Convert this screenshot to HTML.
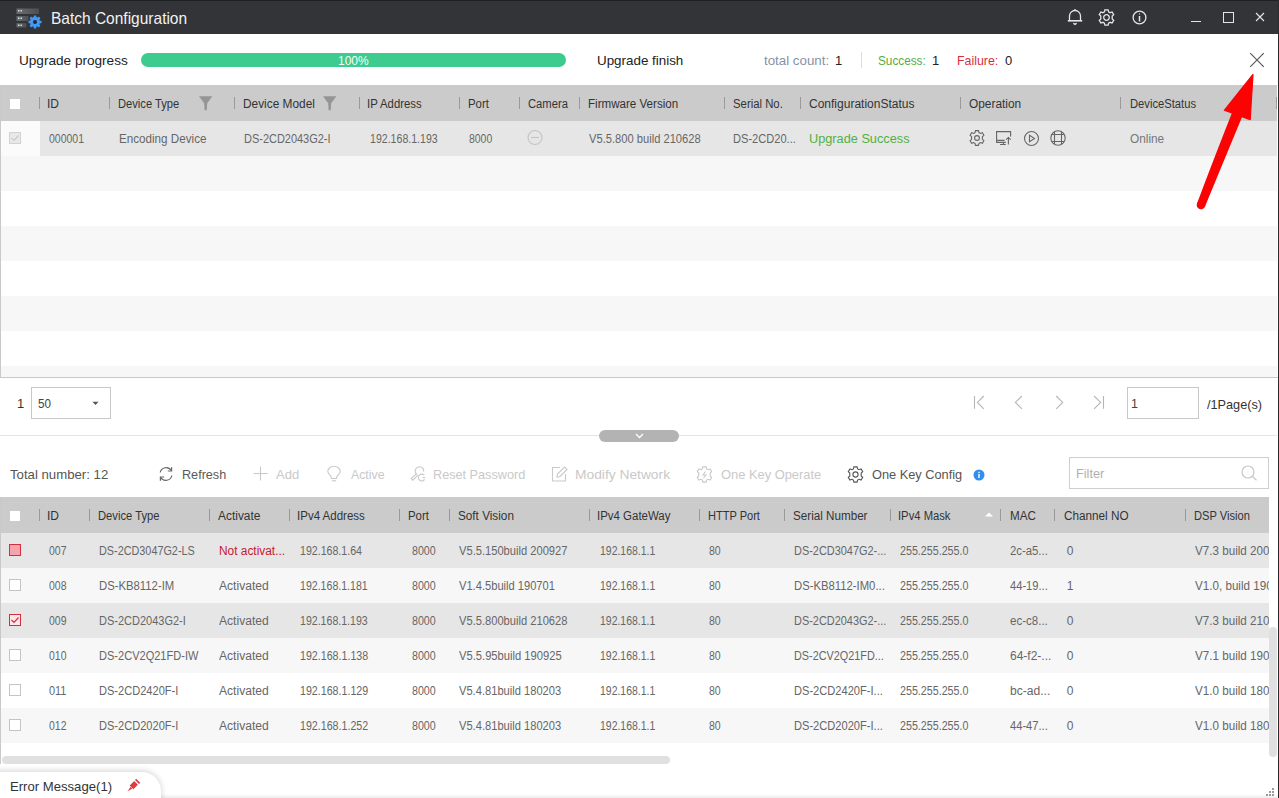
<!DOCTYPE html>
<html><head><meta charset="utf-8">
<style>
*{box-sizing:border-box;margin:0;padding:0}
html,body{width:1279px;height:798px;overflow:hidden;background:#fff}
body{position:relative;font-family:"Liberation Sans",sans-serif;color:#333}
.a{position:absolute}
.t{position:absolute;white-space:nowrap;font-size:12px;margin-top:1px}
svg{position:absolute;overflow:visible}
.sep{position:absolute;width:1px;height:12px;background:#999}
.row{position:absolute;height:35px}
.cb{position:absolute;width:12px;height:12px;border:1px solid #c4c4c4;background:#fff}
</style></head><body>

<div class="a" style="left:0;top:0;width:1279px;height:34px;background:#323438;border-top:1px solid #1f2023"></div>
<div class="a" style="left:1278px;top:0;width:1px;height:798px;background:#2a2b2e"></div>
<svg style="left:16px;top:8px" width="26" height="22" viewBox="0 0 26 22">
  <defs><linearGradient id="lg" x1="0" x2="1"><stop offset="0" stop-color="#6a6d72"/><stop offset="1" stop-color="#4b4e53"/></linearGradient></defs>
  <rect x="0.5" y="0.5" width="22.5" height="5.5" fill="url(#lg)"/>
  <rect x="0.5" y="8" width="12" height="5" fill="url(#lg)"/>
  <rect x="0.5" y="15.2" width="10" height="4.2" fill="url(#lg)"/>
  <rect x="2" y="2" width="1.5" height="1.5" fill="#cfd8dc"/><rect x="4.5" y="2" width="1.5" height="1.5" fill="#cfd8dc"/>
  <rect x="2" y="9.5" width="1.5" height="1.5" fill="#cfe8ec"/><rect x="4.5" y="9.5" width="1.5" height="1.5" fill="#cfe8ec"/>
  <rect x="2" y="16.5" width="1.5" height="1.5" fill="#bfe0d0"/><rect x="4.5" y="16.5" width="1.5" height="1.5" fill="#bfe0d0"/>
  <g transform="translate(19,14)">
    <circle r="5.0" fill="#4499f5"/>
    <g fill="#4499f5">
      <rect x="-1.3" y="-6.5" width="2.6" height="13" rx="0.5"/>
      <rect x="-1.3" y="-6.5" width="2.6" height="13" rx="0.5" transform="rotate(45)"/>
      <rect x="-1.3" y="-6.5" width="2.6" height="13" rx="0.5" transform="rotate(90)"/>
      <rect x="-1.3" y="-6.5" width="2.6" height="13" rx="0.5" transform="rotate(135)"/>
    </g>
    <circle r="2" fill="#23272e"/>
  </g>
</svg>
<div class="t" style="left:51.40px;top:0px;line-height:35px;font-size:16.5px;color:#f2f2f2;transform:scaleX(0.9392);transform-origin:0 0;">Batch Configuration</div>
<svg style="left:1066px;top:8px" width="18" height="18" viewBox="0 0 18 18" fill="none" stroke="#e6e6e6" stroke-width="1.3">
  <path d="M3.5 12.5 V8 A5.5 5.5 0 0 1 14.5 8 V12.5"/>
  <path d="M1.8 12.8 H16.2" stroke-width="1.6"/>
  <path d="M9 1 V2.2"/>
  <path d="M7.3 15.2 L9 16.4 L10.7 15.2"/>
</svg>
<svg style="left:1098px;top:8.5px" width="17" height="17" viewBox="-8.5 -8.5 17 17" fill="none" stroke="#e6e6e6" stroke-width="1.3"><path d="M-1.6 -7.6 H1.6 L2.1 -5.6 L3.6 -4.8 L5.6 -5.5 L7.2 -2.8 L5.7 -1.4 V1.4 L7.2 2.8 L5.6 5.5 L3.6 4.8 L2.1 5.6 L1.6 7.6 H-1.6 L-2.1 5.6 L-3.6 4.8 L-5.6 5.5 L-7.2 2.8 L-5.7 1.4 V-1.4 L-7.2 -2.8 L-5.6 -5.5 L-3.6 -4.8 L-2.1 -5.6 Z"/><circle r="2.8"/></svg>
<svg style="left:1132px;top:9.5px" width="15" height="15" viewBox="0 0 15 15" fill="none" stroke="#e6e6e6" stroke-width="1.3">
  <circle cx="7.5" cy="7.5" r="6.4"/><path d="M7.5 6 V11.5" stroke-width="1.5"/><circle cx="7.5" cy="3.9" r="0.6" fill="#e6e6e6" stroke="none"/></svg>
<div class="a" style="left:1191px;top:21px;width:10px;height:1px;background:#e6e6e6"></div>
<div class="a" style="left:1223px;top:12px;width:11px;height:11px;border:1px solid #e6e6e6"></div>
<svg style="left:1255px;top:12px" width="10" height="10" viewBox="0 0 10 10" stroke="#e6e6e6" stroke-width="1.1"><path d="M1 1 L9 9 M9 1 L1 9"/></svg>
<div class="t" style="left:19.00px;top:48px;line-height:24px;font-size:13.5px;color:#222;transform:scaleX(1.0064);transform-origin:0 0;">Upgrade progress</div>
<div class="a" style="left:141px;top:53px;width:425px;height:14px;border-radius:7px;background:#3dcb8e"></div>
<div class="t" style="left:338.00px;top:53px;line-height:14px;font-size:12px;color:#f4fff8;transform:scaleX(0.9993);transform-origin:0 0;">100%</div>
<div class="t" style="left:597.00px;top:48px;line-height:24px;font-size:13px;color:#222;transform:scaleX(1.0291);transform-origin:0 0;">Upgrade finish</div>
<div class="t" style="left:764.00px;top:48px;line-height:24px;font-size:13px;color:#8793a5;transform:scaleX(1.0240);transform-origin:0 0;">total count:</div>
<div class="t" style="left:835.00px;top:48px;line-height:24px;font-size:13px;color:#222;transform:scaleX(1.0000);transform-origin:0 0;">1</div>
<div class="a" style="left:861px;top:52px;width:1px;height:16px;background:#dcdcdc"></div>
<div class="t" style="left:878.00px;top:48px;line-height:24px;font-size:12.2px;color:#52ad45;transform:scaleX(0.9662);transform-origin:0 0;">Success:</div>
<div class="t" style="left:932.00px;top:48px;line-height:24px;font-size:13px;color:#222;transform:scaleX(1.0000);transform-origin:0 0;">1</div>
<div class="t" style="left:957.00px;top:48px;line-height:24px;font-size:12.2px;color:#d5303b;transform:scaleX(1.0139);transform-origin:0 0;">Failure:</div>
<div class="t" style="left:1005.00px;top:48px;line-height:24px;font-size:13px;color:#222;transform:scaleX(1.0000);transform-origin:0 0;">0</div>
<svg style="left:1249px;top:52px" width="16" height="16" viewBox="0 0 16 16" stroke="#5a5a5a" stroke-width="1.2"><path d="M1.2 1.2 L14.8 14.8 M14.8 1.2 L1.2 14.8"/></svg>
<div class="a" style="left:0;top:85px;width:1px;height:293px;background:#c9c9c9"></div>
<div class="a" style="left:0;top:377px;width:1278px;height:1px;background:#c9c9c9"></div>
<div class="a" style="left:1px;top:85px;width:1276px;height:36px;background:#cbcbcb"></div>
<div class="a" style="left:10px;top:99px;width:10px;height:10px;background:#fff"></div>
<div class="sep" style="left:39px;top:97px"></div>
<div class="sep" style="left:109px;top:97px"></div>
<div class="sep" style="left:234px;top:97px"></div>
<div class="sep" style="left:359px;top:97px"></div>
<div class="sep" style="left:459px;top:97px"></div>
<div class="sep" style="left:519px;top:97px"></div>
<div class="sep" style="left:579px;top:97px"></div>
<div class="sep" style="left:724px;top:97px"></div>
<div class="sep" style="left:800px;top:97px"></div>
<div class="sep" style="left:960px;top:97px"></div>
<div class="sep" style="left:1120px;top:97px"></div>
<div class="sep" style="left:1276px;top:97px"></div>
<div class="t" style="left:47.00px;top:85px;line-height:36px;font-size:12px;color:#333;transform:scaleX(1.0000);transform-origin:0 0;">ID</div>
<div class="t" style="left:118.00px;top:85px;line-height:36px;font-size:12px;color:#333;transform:scaleX(0.9306);transform-origin:0 0;">Device Type</div>
<div class="t" style="left:243.00px;top:85px;line-height:36px;font-size:12px;color:#333;transform:scaleX(0.9892);transform-origin:0 0;">Device Model</div>
<div class="t" style="left:367.00px;top:85px;line-height:36px;font-size:12px;color:#333;transform:scaleX(0.9446);transform-origin:0 0;">IP Address</div>
<div class="t" style="left:468.00px;top:85px;line-height:36px;font-size:12px;color:#333;transform:scaleX(0.9482);transform-origin:0 0;">Port</div>
<div class="t" style="left:528.00px;top:85px;line-height:36px;font-size:12px;color:#333;transform:scaleX(0.9359);transform-origin:0 0;">Camera</div>
<div class="t" style="left:588.00px;top:85px;line-height:36px;font-size:12px;color:#333;transform:scaleX(0.9657);transform-origin:0 0;">Firmware Version</div>
<div class="t" style="left:733.00px;top:85px;line-height:36px;font-size:12px;color:#333;transform:scaleX(0.9455);transform-origin:0 0;">Serial No.</div>
<div class="t" style="left:809.00px;top:85px;line-height:36px;font-size:12px;color:#333;transform:scaleX(1.0010);transform-origin:0 0;">ConfigurationStatus</div>
<div class="t" style="left:969.00px;top:85px;line-height:36px;font-size:12px;color:#333;transform:scaleX(0.9899);transform-origin:0 0;">Operation</div>
<div class="t" style="left:1130.00px;top:85px;line-height:36px;font-size:12px;color:#333;transform:scaleX(0.9335);transform-origin:0 0;">DeviceStatus</div>
<svg style="left:199px;top:96px" width="14" height="15" viewBox="0 0 14 15"><path d="M0 0.2 H13.3 L8.2 7.2 L7.8 14.3 H5.6 L5.2 7.2 Z" fill="#959595"/></svg>
<svg style="left:323px;top:96px" width="14" height="15" viewBox="0 0 14 15"><path d="M0 0.2 H13.3 L8.2 7.2 L7.8 14.3 H5.6 L5.2 7.2 Z" fill="#959595"/></svg>
<div class="row" style="left:1px;top:121px;width:39px;background:#fbfbfb"></div>
<div class="row" style="left:40px;top:121px;width:1237px;background:#e6e6e6"></div>
<div class="a" style="left:9px;top:132px;width:12px;height:12px;border:1px solid #d2d2d2;background:#e8e8e8"></div>
<svg style="left:9px;top:132px" width="12" height="12" viewBox="0 0 12 12" fill="none" stroke="#b8b8b8" stroke-width="1"><path d="M2.5 6 L5 8.5 L9.5 3.5"/></svg>
<div class="t" style="left:49.00px;top:121px;line-height:35px;font-size:12px;color:#666;transform:scaleX(0.8732);transform-origin:0 0;">000001</div>
<div class="t" style="left:119.00px;top:121px;line-height:35px;font-size:12px;color:#666;transform:scaleX(0.9709);transform-origin:0 0;">Encoding Device</div>
<div class="t" style="left:244.00px;top:121px;line-height:35px;font-size:12px;color:#666;transform:scaleX(0.9139);transform-origin:0 0;">DS-2CD2043G2-I</div>
<div class="t" style="left:369.50px;top:121px;line-height:35px;font-size:12px;color:#666;transform:scaleX(0.8824);transform-origin:0 0;">192.168.1.193</div>
<div class="t" style="left:469.00px;top:121px;line-height:35px;font-size:12px;color:#666;transform:scaleX(0.8697);transform-origin:0 0;">8000</div>
<div class="t" style="left:589.00px;top:121px;line-height:35px;font-size:12px;color:#666;transform:scaleX(0.9300);transform-origin:0 0;">V5.5.800 build 210628</div>
<div class="t" style="left:733.00px;top:121px;line-height:35px;font-size:12px;color:#666;transform:scaleX(0.9234);transform-origin:0 0;">DS-2CD20...</div>
<div class="t" style="left:809.00px;top:121px;line-height:35px;font-size:12px;color:#52b043;transform:scaleX(1.0611);transform-origin:0 0;">Upgrade Success</div>
<div class="t" style="left:1130.00px;top:121px;line-height:35px;font-size:12px;color:#777;transform:scaleX(0.9853);transform-origin:0 0;">Online</div>
<svg style="left:527px;top:130px" width="16" height="16" viewBox="0 0 16 16" fill="none" stroke="#c4c4c4" stroke-width="1.1"><circle cx="8" cy="7.5" r="7"/><path d="M4 7.5 H12"/></svg>
<svg style="left:969px;top:130px" width="16" height="16" viewBox="-8 -8 16 16" fill="none" stroke="#666" stroke-width="1.1"><path d="M-1.5 -7.4 H1.5 L2 -5.4 L3.5 -4.6 L5.4 -5.3 L6.9 -2.7 L5.4 -1.3 V1.3 L6.9 2.7 L5.4 5.3 L3.5 4.6 L2 5.4 L1.5 7.4 H-1.5 L-2 5.4 L-3.5 4.6 L-5.4 5.3 L-6.9 2.7 L-5.4 1.3 V-1.3 L-6.9 -2.7 L-5.4 -5.3 L-3.5 -4.6 L-2 -5.4 Z"/><circle r="2.4"/></svg>
<svg style="left:996px;top:131px" width="16" height="15" viewBox="0 0 16 15" fill="none" stroke="#666" stroke-width="1.1"><path d="M14.6 5.4 V0.6 H0.6 V11.4 H9.8 M0.6 9.4 H8.6 M7.4 11.4 V13.5 M4 13.5 H9.8"/><path d="M12.4 13.6 V6.4 M10.1 8.6 L12.4 6.4 L14.7 8.6"/></svg>
<svg style="left:1024px;top:131px" width="16" height="16" viewBox="0 0 16 16" fill="none" stroke="#666" stroke-width="1.1"><circle cx="7.5" cy="7.5" r="7"/><path d="M5.5 4.3 L10.5 7.5 L5.5 10.7 Z"/></svg>
<svg style="left:1050px;top:130px" width="16" height="16" viewBox="0 0 16 16" fill="none" stroke="#666" stroke-width="1.1"><circle cx="8" cy="8" r="7.2"/><path d="M4.5 1.6 V14.4 M11.5 1.6 V14.4 M1.6 4.5 H14.4 M1.6 11.5 H14.4"/></svg>
<div class="row" style="left:1px;top:156px;width:1276px;height:35px;background:#f7f7f7"></div>
<div class="row" style="left:1px;top:191px;width:1276px;height:35px;background:#ffffff"></div>
<div class="row" style="left:1px;top:226px;width:1276px;height:35px;background:#f7f7f7"></div>
<div class="row" style="left:1px;top:261px;width:1276px;height:35px;background:#ffffff"></div>
<div class="row" style="left:1px;top:296px;width:1276px;height:35px;background:#f7f7f7"></div>
<div class="row" style="left:1px;top:331px;width:1276px;height:35px;background:#ffffff"></div>
<div class="row" style="left:1px;top:366px;width:1276px;height:11px;background:#f7f7f7"></div>
<div class="t" style="left:17.00px;top:387px;line-height:32px;font-size:13px;color:#333;transform:scaleX(1.0000);transform-origin:0 0;">1</div>
<div class="a" style="left:31px;top:387px;width:80px;height:32px;border:1px solid #c8c8c8;background:#fff"></div>
<div class="t" style="left:38.00px;top:387px;line-height:32px;font-size:12.5px;color:#444;transform:scaleX(0.9318);transform-origin:0 0;">50</div>
<svg style="left:92px;top:401px" width="7" height="5" viewBox="0 0 7 5"><path d="M0.5 0.8 H6.5 L3.5 4 Z" fill="#555"/></svg>
<svg style="left:972px;top:395px" width="134" height="16" viewBox="0 0 134 16" fill="none" stroke="#b5b5b5" stroke-width="1.1"><path d="M2.5 1 V13.8 M11.8 1 L5.4 7.4 L11.8 13.8"/><path d="M49.9 1 L43.4 7.4 L49.9 13.8"/><path d="M84.2 1 L90.7 7.4 L84.2 13.8"/><path d="M122.1 1 L128.6 7.4 L122.1 13.8 M131.5 1 V13.8"/></svg>
<div class="a" style="left:1127px;top:387px;width:72px;height:32px;border:1px solid #c8c8c8;background:#fff"></div>
<div class="t" style="left:1131.00px;top:387px;line-height:32px;font-size:12.5px;color:#444;transform:scaleX(1.0000);transform-origin:0 0;">1</div>
<div class="t" style="left:1207.00px;top:387px;line-height:33px;font-size:13px;color:#333;transform:scaleX(0.9762);transform-origin:0 0;">/1Page(s)</div>
<div class="a" style="left:0;top:435px;width:1277px;height:1px;background:#e4e4e4"></div>
<div class="a" style="left:599px;top:430px;width:80px;height:12px;border-radius:6px;background:#b3b3b3"></div>
<svg style="left:635px;top:433px" width="9" height="6" viewBox="0 0 9 6" fill="none" stroke="#fff" stroke-width="1.3"><path d="M1 1 L4.5 4.5 L8 1"/></svg>
<div class="t" style="left:9.50px;top:462px;line-height:24px;font-size:13px;color:#555;transform:scaleX(1.0145);transform-origin:0 0;">Total number: 12</div>
<svg style="left:158px;top:466px" width="16" height="16" viewBox="0 0 16 16" fill="none" stroke="#666" stroke-width="1.2"><path d="M2.2 6.5 A6 6 0 0 1 13.2 4.5"/><path d="M13.6 1.2 V5 H9.8"/><path d="M13.8 9.5 A6 6 0 0 1 2.8 11.5"/><path d="M2.4 14.8 V11 H6.2"/></svg>
<div class="t" style="left:181.50px;top:462px;line-height:24px;font-size:13px;color:#5a5a5a;transform:scaleX(0.9709);transform-origin:0 0;">Refresh</div>
<svg style="left:253px;top:466px" width="15" height="15" viewBox="0 0 15 15" fill="none" stroke="#c9c9c9" stroke-width="1.1"><path d="M7.5 0.5 V14.5 M0.5 7.5 H14.5"/></svg>
<div class="t" style="left:276.30px;top:462px;line-height:24px;font-size:13px;color:#c9c9c9;transform:scaleX(1.0043);transform-origin:0 0;">Add</div>
<svg style="left:327px;top:466px" width="14" height="16" viewBox="0 0 14 16" fill="none" stroke="#c9c9c9" stroke-width="1.1"><path d="M4.3 12.5 L4.3 11.5 C4.3 9.5 0.8 8.2 0.8 5.4 A6.2 5.2 0 0 1 13.2 5.4 C13.2 8.2 9.7 9.5 9.7 11.5 L9.7 12.5 Z"/><path d="M4.8 14.8 H9.2"/></svg>
<div class="t" style="left:350.50px;top:462px;line-height:24px;font-size:13px;color:#c9c9c9;transform:scaleX(0.9454);transform-origin:0 0;">Active</div>
<svg style="left:410px;top:466px" width="17" height="16" viewBox="0 0 17 16" fill="none" stroke="#c9c9c9" stroke-width="1.1"><path d="M7.2 8.6 A4.2 4.2 0 1 1 13.6 5.6"/><path d="M6.6 7.6 L1.2 12.6 L2.6 14.2 L8.0 9.2"/><path d="M14.6 13.4 A3.4 3.4 0 1 1 14.2 9.2"/><path d="M15.2 11.6 H12.6"/></svg>
<div class="t" style="left:433.00px;top:462px;line-height:24px;font-size:13px;color:#c9c9c9;transform:scaleX(0.9741);transform-origin:0 0;">Reset Password</div>
<svg style="left:551px;top:466px" width="17" height="16" viewBox="0 0 17 16" fill="none" stroke="#c9c9c9" stroke-width="1.1"><path d="M9 1.5 H1.5 V15 H14.5 V8"/><path d="M6 11 L6.5 8 L13.5 1 L16 3.5 L9 10.5 Z"/></svg>
<div class="t" style="left:575.00px;top:462px;line-height:24px;font-size:13px;color:#c9c9c9;transform:scaleX(1.0609);transform-origin:0 0;">Modify Network</div>
<svg style="left:696px;top:466px" width="17" height="17" viewBox="-8.5 -8.5 17 17" fill="none" stroke="#c9c9c9" stroke-width="1.1"><path d="M-1.6 -7.6 H1.6 L2.1 -5.6 L3.6 -4.8 L5.6 -5.5 L7.2 -2.8 L5.7 -1.4 V1.4 L7.2 2.8 L5.6 5.5 L3.6 4.8 L2.1 5.6 L1.6 7.6 H-1.6 L-2.1 5.6 L-3.6 4.8 L-5.6 5.5 L-7.2 2.8 L-5.7 1.4 V-1.4 L-7.2 -2.8 L-5.6 -5.5 L-3.6 -4.8 L-2.1 -5.6 Z"/><path d="M1 -3 L-1.5 0.5 H1.5 L-1 3.5"/></svg>
<div class="t" style="left:721.00px;top:462px;line-height:24px;font-size:13px;color:#c9c9c9;transform:scaleX(0.9907);transform-origin:0 0;">One Key Operate</div>
<svg style="left:847px;top:466px" width="17" height="17" viewBox="-8.5 -8.5 17 17" fill="none" stroke="#555" stroke-width="1.1"><path d="M-1.6 -7.6 H1.6 L2.1 -5.6 L3.6 -4.8 L5.6 -5.5 L7.2 -2.8 L5.7 -1.4 V1.4 L7.2 2.8 L5.6 5.5 L3.6 4.8 L2.1 5.6 L1.6 7.6 H-1.6 L-2.1 5.6 L-3.6 4.8 L-5.6 5.5 L-7.2 2.8 L-5.7 1.4 V-1.4 L-7.2 -2.8 L-5.6 -5.5 L-3.6 -4.8 L-2.1 -5.6 Z"/><circle r="2.6"/></svg>
<div class="t" style="left:872.00px;top:462px;line-height:24px;font-size:13px;color:#555;transform:scaleX(0.9831);transform-origin:0 0;">One Key Config</div>
<svg style="left:973px;top:469px" width="12" height="12" viewBox="0 0 12 12"><circle cx="6" cy="6" r="5.5" fill="#2f8ef0"/><rect x="5.3" y="5" width="1.4" height="4" fill="#fff"/><rect x="5.3" y="2.8" width="1.4" height="1.3" fill="#fff"/></svg>
<div class="a" style="left:1069px;top:457px;width:200px;height:32px;border:1px solid #cfcfcf;background:#fff"></div>
<div class="t" style="left:1076.00px;top:457px;line-height:32px;font-size:12.5px;color:#b0b0b0;transform:scaleX(1.0145);transform-origin:0 0;">Filter</div>
<svg style="left:1241px;top:465px" width="17" height="16" viewBox="0 0 17 16" fill="none" stroke="#c8c8c8" stroke-width="1.2"><circle cx="7" cy="7" r="6"/><path d="M11.3 11.3 L15.5 15.2"/></svg>
<div class="a" style="left:0;top:497px;width:1px;height:267px;background:#c9c9c9"></div>
<div class="a" style="left:1px;top:497px;width:1268px;height:36px;background:#cbcbcb"></div>
<div class="a" style="left:10px;top:511px;width:10px;height:10px;background:#fff"></div>
<div class="sep" style="left:39px;top:509px"></div>
<div class="sep" style="left:89px;top:509px"></div>
<div class="sep" style="left:209px;top:509px"></div>
<div class="sep" style="left:289px;top:509px"></div>
<div class="sep" style="left:399px;top:509px"></div>
<div class="sep" style="left:449px;top:509px"></div>
<div class="sep" style="left:589px;top:509px"></div>
<div class="sep" style="left:699px;top:509px"></div>
<div class="sep" style="left:784px;top:509px"></div>
<div class="sep" style="left:890px;top:509px"></div>
<div class="sep" style="left:1000px;top:509px"></div>
<div class="sep" style="left:1054px;top:509px"></div>
<div class="sep" style="left:1185px;top:509px"></div>
<div class="t" style="left:47.00px;top:497px;line-height:36px;font-size:12px;color:#333;transform:scaleX(1.0000);transform-origin:0 0;">ID</div>
<div class="t" style="left:98.00px;top:497px;line-height:36px;font-size:12px;color:#333;transform:scaleX(0.9344);transform-origin:0 0;">Device Type</div>
<div class="t" style="left:218.00px;top:497px;line-height:36px;font-size:12px;color:#333;transform:scaleX(0.9939);transform-origin:0 0;">Activate</div>
<div class="t" style="left:296.50px;top:497px;line-height:36px;font-size:12px;color:#333;transform:scaleX(0.9593);transform-origin:0 0;">IPv4 Address</div>
<div class="t" style="left:408.00px;top:497px;line-height:36px;font-size:12px;color:#333;transform:scaleX(0.9482);transform-origin:0 0;">Port</div>
<div class="t" style="left:458.00px;top:497px;line-height:36px;font-size:12px;color:#333;transform:scaleX(0.9783);transform-origin:0 0;">Soft Vision</div>
<div class="t" style="left:596.50px;top:497px;line-height:36px;font-size:12px;color:#333;transform:scaleX(0.9550);transform-origin:0 0;">IPv4 GateWay</div>
<div class="t" style="left:708.00px;top:497px;line-height:36px;font-size:12px;color:#333;transform:scaleX(0.9200);transform-origin:0 0;">HTTP Port</div>
<div class="t" style="left:793.00px;top:497px;line-height:36px;font-size:12px;color:#333;transform:scaleX(0.9714);transform-origin:0 0;">Serial Number</div>
<div class="t" style="left:898.00px;top:497px;line-height:36px;font-size:12px;color:#333;transform:scaleX(0.9372);transform-origin:0 0;">IPv4 Mask</div>
<div class="t" style="left:1009.50px;top:497px;line-height:36px;font-size:12px;color:#333;transform:scaleX(0.9722);transform-origin:0 0;">MAC</div>
<div class="t" style="left:1064.00px;top:497px;line-height:36px;font-size:12px;color:#333;transform:scaleX(0.9779);transform-origin:0 0;">Channel NO</div>
<div class="t" style="left:1194.00px;top:497px;line-height:36px;font-size:12px;color:#333;transform:scaleX(0.9281);transform-origin:0 0;">DSP Vision</div>
<svg style="left:985px;top:512px" width="8" height="5" viewBox="0 0 8 5"><path d="M0 4.5 L4 0.5 L8 4.5 Z" fill="#fff"/></svg>
<div class="a" style="left:1px;top:533px;width:1268px;height:231px;overflow:hidden">
<div class="row" style="left:0;top:0px;width:1268px;background:#e6e6e6"></div>
<div class="t" style="left:48.25px;top:0px;line-height:35px;font-size:12px;color:#666;transform:scaleX(0.8723);transform-origin:0 0;">007</div>
<div class="t" style="left:98.25px;top:0px;line-height:35px;font-size:12px;color:#666;transform:scaleX(0.9029);transform-origin:0 0;">DS-2CD3047G2-LS</div>
<div class="t" style="left:218.25px;top:0px;line-height:35px;font-size:12px;color:#c8182f;transform:scaleX(0.9908);transform-origin:0 0;">Not activat...</div>
<div class="t" style="left:298.50px;top:0px;line-height:35px;font-size:12px;color:#666;transform:scaleX(0.8843);transform-origin:0 0;">192.168.1.64</div>
<div class="t" style="left:410.75px;top:0px;line-height:35px;font-size:12px;color:#666;transform:scaleX(0.8882);transform-origin:0 0;">8000</div>
<div class="t" style="left:457.75px;top:0px;line-height:35px;font-size:12px;color:#666;transform:scaleX(0.9287);transform-origin:0 0;">V5.5.150build 200927</div>
<div class="t" style="left:598.50px;top:0px;line-height:35px;font-size:12px;color:#666;transform:scaleX(0.8710);transform-origin:0 0;">192.168.1.1</div>
<div class="t" style="left:707.75px;top:0px;line-height:35px;font-size:12px;color:#666;transform:scaleX(0.8776);transform-origin:0 0;">80</div>
<div class="t" style="left:793.00px;top:0px;line-height:35px;font-size:12px;color:#666;transform:scaleX(0.9105);transform-origin:0 0;">DS-2CD3047G2-...</div>
<div class="t" style="left:899.00px;top:0px;line-height:35px;font-size:12px;color:#666;transform:scaleX(0.8921);transform-origin:0 0;">255.255.255.0</div>
<div class="t" style="left:1009.00px;top:0px;line-height:35px;font-size:12px;color:#666;transform:scaleX(0.9449);transform-origin:0 0;">2c-a5...</div>
<div class="t" style="left:1065.75px;top:0px;line-height:35px;font-size:12px;color:#666;transform:scaleX(1.0000);transform-origin:0 0;">0</div>
<div class="t" style="left:1193.50px;top:0px;line-height:35px;font-size:12px;color:#666;transform:scaleX(0.9700);transform-origin:0 0;">V7.3 build 200922</div>
<div class="row" style="left:0;top:35px;width:1268px;background:#f7f7f7"></div>
<div class="t" style="left:48.25px;top:35px;line-height:35px;font-size:12px;color:#666;transform:scaleX(0.8723);transform-origin:0 0;">008</div>
<div class="t" style="left:98.25px;top:35px;line-height:35px;font-size:12px;color:#666;transform:scaleX(0.9429);transform-origin:0 0;">DS-KB8112-IM</div>
<div class="t" style="left:218.25px;top:35px;line-height:35px;font-size:12px;color:#666;transform:scaleX(1.0065);transform-origin:0 0;">Activated</div>
<div class="t" style="left:298.50px;top:35px;line-height:35px;font-size:12px;color:#666;transform:scaleX(0.8824);transform-origin:0 0;">192.168.1.181</div>
<div class="t" style="left:410.75px;top:35px;line-height:35px;font-size:12px;color:#666;transform:scaleX(0.8882);transform-origin:0 0;">8000</div>
<div class="t" style="left:457.75px;top:35px;line-height:35px;font-size:12px;color:#666;transform:scaleX(0.9277);transform-origin:0 0;">V1.4.5build 190701</div>
<div class="t" style="left:598.50px;top:35px;line-height:35px;font-size:12px;color:#666;transform:scaleX(0.8710);transform-origin:0 0;">192.168.1.1</div>
<div class="t" style="left:707.75px;top:35px;line-height:35px;font-size:12px;color:#666;transform:scaleX(0.8776);transform-origin:0 0;">80</div>
<div class="t" style="left:793.00px;top:35px;line-height:35px;font-size:12px;color:#666;transform:scaleX(0.9413);transform-origin:0 0;">DS-KB8112-IM0...</div>
<div class="t" style="left:899.00px;top:35px;line-height:35px;font-size:12px;color:#666;transform:scaleX(0.8921);transform-origin:0 0;">255.255.255.0</div>
<div class="t" style="left:1009.00px;top:35px;line-height:35px;font-size:12px;color:#666;transform:scaleX(0.9292);transform-origin:0 0;">44-19...</div>
<div class="t" style="left:1065.75px;top:35px;line-height:35px;font-size:12px;color:#666;transform:scaleX(1.0000);transform-origin:0 0;">1</div>
<div class="t" style="left:1193.50px;top:35px;line-height:35px;font-size:12px;color:#666;transform:scaleX(0.9700);transform-origin:0 0;">V1.0, build 190701</div>
<div class="row" style="left:0;top:70px;width:1268px;background:#e6e6e6"></div>
<div class="t" style="left:48.25px;top:70px;line-height:35px;font-size:12px;color:#666;transform:scaleX(0.8723);transform-origin:0 0;">009</div>
<div class="t" style="left:98.25px;top:70px;line-height:35px;font-size:12px;color:#666;transform:scaleX(0.9166);transform-origin:0 0;">DS-2CD2043G2-I</div>
<div class="t" style="left:218.25px;top:70px;line-height:35px;font-size:12px;color:#666;transform:scaleX(1.0065);transform-origin:0 0;">Activated</div>
<div class="t" style="left:298.50px;top:70px;line-height:35px;font-size:12px;color:#666;transform:scaleX(0.8824);transform-origin:0 0;">192.168.1.193</div>
<div class="t" style="left:410.75px;top:70px;line-height:35px;font-size:12px;color:#666;transform:scaleX(0.8882);transform-origin:0 0;">8000</div>
<div class="t" style="left:457.75px;top:70px;line-height:35px;font-size:12px;color:#666;transform:scaleX(0.9287);transform-origin:0 0;">V5.5.800build 210628</div>
<div class="t" style="left:598.50px;top:70px;line-height:35px;font-size:12px;color:#666;transform:scaleX(0.8710);transform-origin:0 0;">192.168.1.1</div>
<div class="t" style="left:707.75px;top:70px;line-height:35px;font-size:12px;color:#666;transform:scaleX(0.8776);transform-origin:0 0;">80</div>
<div class="t" style="left:793.00px;top:70px;line-height:35px;font-size:12px;color:#666;transform:scaleX(0.9105);transform-origin:0 0;">DS-2CD2043G2-...</div>
<div class="t" style="left:899.00px;top:70px;line-height:35px;font-size:12px;color:#666;transform:scaleX(0.8921);transform-origin:0 0;">255.255.255.0</div>
<div class="t" style="left:1009.00px;top:70px;line-height:35px;font-size:12px;color:#666;transform:scaleX(0.9612);transform-origin:0 0;">ec-c8...</div>
<div class="t" style="left:1065.75px;top:70px;line-height:35px;font-size:12px;color:#666;transform:scaleX(1.0000);transform-origin:0 0;">0</div>
<div class="t" style="left:1193.50px;top:70px;line-height:35px;font-size:12px;color:#666;transform:scaleX(0.9700);transform-origin:0 0;">V7.3 build 210628</div>
<div class="row" style="left:0;top:105px;width:1268px;background:#f7f7f7"></div>
<div class="t" style="left:48.25px;top:105px;line-height:35px;font-size:12px;color:#666;transform:scaleX(0.8723);transform-origin:0 0;">010</div>
<div class="t" style="left:98.25px;top:105px;line-height:35px;font-size:12px;color:#666;transform:scaleX(0.9200);transform-origin:0 0;">DS-2CV2Q21FD-IW</div>
<div class="t" style="left:218.25px;top:105px;line-height:35px;font-size:12px;color:#666;transform:scaleX(1.0065);transform-origin:0 0;">Activated</div>
<div class="t" style="left:298.50px;top:105px;line-height:35px;font-size:12px;color:#666;transform:scaleX(0.8888);transform-origin:0 0;">192.168.1.138</div>
<div class="t" style="left:410.75px;top:105px;line-height:35px;font-size:12px;color:#666;transform:scaleX(0.8882);transform-origin:0 0;">8000</div>
<div class="t" style="left:457.75px;top:105px;line-height:35px;font-size:12px;color:#666;transform:scaleX(0.9328);transform-origin:0 0;">V5.5.95build 190925</div>
<div class="t" style="left:598.50px;top:105px;line-height:35px;font-size:12px;color:#666;transform:scaleX(0.8710);transform-origin:0 0;">192.168.1.1</div>
<div class="t" style="left:707.75px;top:105px;line-height:35px;font-size:12px;color:#666;transform:scaleX(0.8776);transform-origin:0 0;">80</div>
<div class="t" style="left:793.00px;top:105px;line-height:35px;font-size:12px;color:#666;transform:scaleX(0.9038);transform-origin:0 0;">DS-2CV2Q21FD...</div>
<div class="t" style="left:899.00px;top:105px;line-height:35px;font-size:12px;color:#666;transform:scaleX(0.8921);transform-origin:0 0;">255.255.255.0</div>
<div class="t" style="left:1009.00px;top:105px;line-height:35px;font-size:12px;color:#666;transform:scaleX(0.9996);transform-origin:0 0;">64-f2-...</div>
<div class="t" style="left:1065.75px;top:105px;line-height:35px;font-size:12px;color:#666;transform:scaleX(1.0000);transform-origin:0 0;">0</div>
<div class="t" style="left:1193.50px;top:105px;line-height:35px;font-size:12px;color:#666;transform:scaleX(0.9700);transform-origin:0 0;">V7.1 build 190925</div>
<div class="row" style="left:0;top:140px;width:1268px;background:#ffffff"></div>
<div class="t" style="left:48.25px;top:140px;line-height:35px;font-size:12px;color:#666;transform:scaleX(0.9123);transform-origin:0 0;">011</div>
<div class="t" style="left:98.25px;top:140px;line-height:35px;font-size:12px;color:#666;transform:scaleX(0.9219);transform-origin:0 0;">DS-2CD2420F-I</div>
<div class="t" style="left:218.25px;top:140px;line-height:35px;font-size:12px;color:#666;transform:scaleX(1.0065);transform-origin:0 0;">Activated</div>
<div class="t" style="left:298.50px;top:140px;line-height:35px;font-size:12px;color:#666;transform:scaleX(0.8888);transform-origin:0 0;">192.168.1.129</div>
<div class="t" style="left:410.75px;top:140px;line-height:35px;font-size:12px;color:#666;transform:scaleX(0.8882);transform-origin:0 0;">8000</div>
<div class="t" style="left:457.75px;top:140px;line-height:35px;font-size:12px;color:#666;transform:scaleX(0.9282);transform-origin:0 0;">V5.4.81build 180203</div>
<div class="t" style="left:598.50px;top:140px;line-height:35px;font-size:12px;color:#666;transform:scaleX(0.8710);transform-origin:0 0;">192.168.1.1</div>
<div class="t" style="left:707.75px;top:140px;line-height:35px;font-size:12px;color:#666;transform:scaleX(0.8776);transform-origin:0 0;">80</div>
<div class="t" style="left:793.00px;top:140px;line-height:35px;font-size:12px;color:#666;transform:scaleX(0.9248);transform-origin:0 0;">DS-2CD2420F-I...</div>
<div class="t" style="left:899.00px;top:140px;line-height:35px;font-size:12px;color:#666;transform:scaleX(0.8921);transform-origin:0 0;">255.255.255.0</div>
<div class="t" style="left:1009.00px;top:140px;line-height:35px;font-size:12px;color:#666;transform:scaleX(1.0079);transform-origin:0 0;">bc-ad...</div>
<div class="t" style="left:1065.75px;top:140px;line-height:35px;font-size:12px;color:#666;transform:scaleX(1.0000);transform-origin:0 0;">0</div>
<div class="t" style="left:1193.50px;top:140px;line-height:35px;font-size:12px;color:#666;transform:scaleX(0.9700);transform-origin:0 0;">V1.0 build 180203</div>
<div class="row" style="left:0;top:175px;width:1268px;background:#f7f7f7"></div>
<div class="t" style="left:48.25px;top:175px;line-height:35px;font-size:12px;color:#666;transform:scaleX(0.8723);transform-origin:0 0;">012</div>
<div class="t" style="left:98.25px;top:175px;line-height:35px;font-size:12px;color:#666;transform:scaleX(0.9219);transform-origin:0 0;">DS-2CD2020F-I</div>
<div class="t" style="left:218.25px;top:175px;line-height:35px;font-size:12px;color:#666;transform:scaleX(1.0065);transform-origin:0 0;">Activated</div>
<div class="t" style="left:298.50px;top:175px;line-height:35px;font-size:12px;color:#666;transform:scaleX(0.8888);transform-origin:0 0;">192.168.1.252</div>
<div class="t" style="left:410.75px;top:175px;line-height:35px;font-size:12px;color:#666;transform:scaleX(0.8882);transform-origin:0 0;">8000</div>
<div class="t" style="left:457.75px;top:175px;line-height:35px;font-size:12px;color:#666;transform:scaleX(0.9282);transform-origin:0 0;">V5.4.81build 180203</div>
<div class="t" style="left:598.50px;top:175px;line-height:35px;font-size:12px;color:#666;transform:scaleX(0.8710);transform-origin:0 0;">192.168.1.1</div>
<div class="t" style="left:707.75px;top:175px;line-height:35px;font-size:12px;color:#666;transform:scaleX(0.8776);transform-origin:0 0;">80</div>
<div class="t" style="left:793.00px;top:175px;line-height:35px;font-size:12px;color:#666;transform:scaleX(0.9248);transform-origin:0 0;">DS-2CD2020F-I...</div>
<div class="t" style="left:899.00px;top:175px;line-height:35px;font-size:12px;color:#666;transform:scaleX(0.8921);transform-origin:0 0;">255.255.255.0</div>
<div class="t" style="left:1009.00px;top:175px;line-height:35px;font-size:12px;color:#666;transform:scaleX(0.9292);transform-origin:0 0;">44-47...</div>
<div class="t" style="left:1065.75px;top:175px;line-height:35px;font-size:12px;color:#666;transform:scaleX(1.0000);transform-origin:0 0;">0</div>
<div class="t" style="left:1193.50px;top:175px;line-height:35px;font-size:12px;color:#666;transform:scaleX(0.9700);transform-origin:0 0;">V1.0 build 180203</div>
</div>
<div class="a" style="left:9px;top:544px;width:12px;height:12px;border:1px solid #d32f3f;background:#f5a3ad"></div>
<div class="cb" style="left:9px;top:579px"></div>
<div class="a" style="left:9px;top:614px;width:12px;height:12px;border:1px solid #d32f3f;background:#fde8ea"></div>
<svg style="left:9px;top:614px" width="12" height="12" viewBox="0 0 12 12" fill="none" stroke="#d32f3f" stroke-width="1.2"><path d="M2.5 6 L5 8.5 L9.5 3.5"/></svg>
<div class="cb" style="left:9px;top:649px"></div>
<div class="cb" style="left:9px;top:684px"></div>
<div class="cb" style="left:9px;top:719px"></div>
<div class="a" style="left:2px;top:756px;width:668px;height:8px;border-radius:4px;background:#e0e0e0"></div>
<div class="a" style="left:1269px;top:627px;width:8px;height:130px;border-radius:4px;background:#e0e0e0"></div>
<div class="a" style="left:0;top:765px;width:1278px;height:33px;background:linear-gradient(#fff,#fff 88%,#ececec)"></div>
<div class="a" style="left:-10px;top:772px;width:171px;height:40px;border-radius:0 19px 0 0;background:#fff;box-shadow:0 -1px 6px rgba(0,0,0,0.18)"></div>
<div class="t" style="left:9.60px;top:774px;line-height:24px;font-size:13px;color:#333;transform:scaleX(1.0089);transform-origin:0 0;">Error Message(1)</div>
<svg style="left:127px;top:778px" width="14" height="14" viewBox="0 0 14 14"><g fill="#e0393e"><path d="M0.5 13.5 L3.6 8.8 L5.2 10.4 Z"/><path d="M10.9 6.78 L7.22 3.1 L2.7 7.62 L6.38 11.3 Z"/><path d="M8.55 1.35 L12.65 5.45" stroke="#e0393e" stroke-width="1.7"/></g></svg>
<svg style="left:1266px;top:788px" width="9" height="9" viewBox="0 0 9 9" fill="#9a9a9a"><rect x="6" y="0" width="2" height="2"/><rect x="3" y="3" width="2" height="2"/><rect x="6" y="3" width="2" height="2"/><rect x="0" y="6" width="2" height="2"/><rect x="3" y="6" width="2" height="2"/><rect x="6" y="6" width="2" height="2"/></svg>
<svg style="left:0;top:0" width="1279" height="798" viewBox="0 0 1279 798"><g fill="#fb0303"><circle cx="1201" cy="205" r="4.3"/><path d="M1197.0 203.4 Q1214 158 1233.9 107.9 L1244.1 112.1 Q1223 163 1205.0 206.6 Z"/><path d="M1253 74.5 L1224.3 110.3 L1250.2 119.6 Z" stroke="#fb0303" stroke-width="1.2" stroke-linejoin="round"/></g></svg>
</body></html>
